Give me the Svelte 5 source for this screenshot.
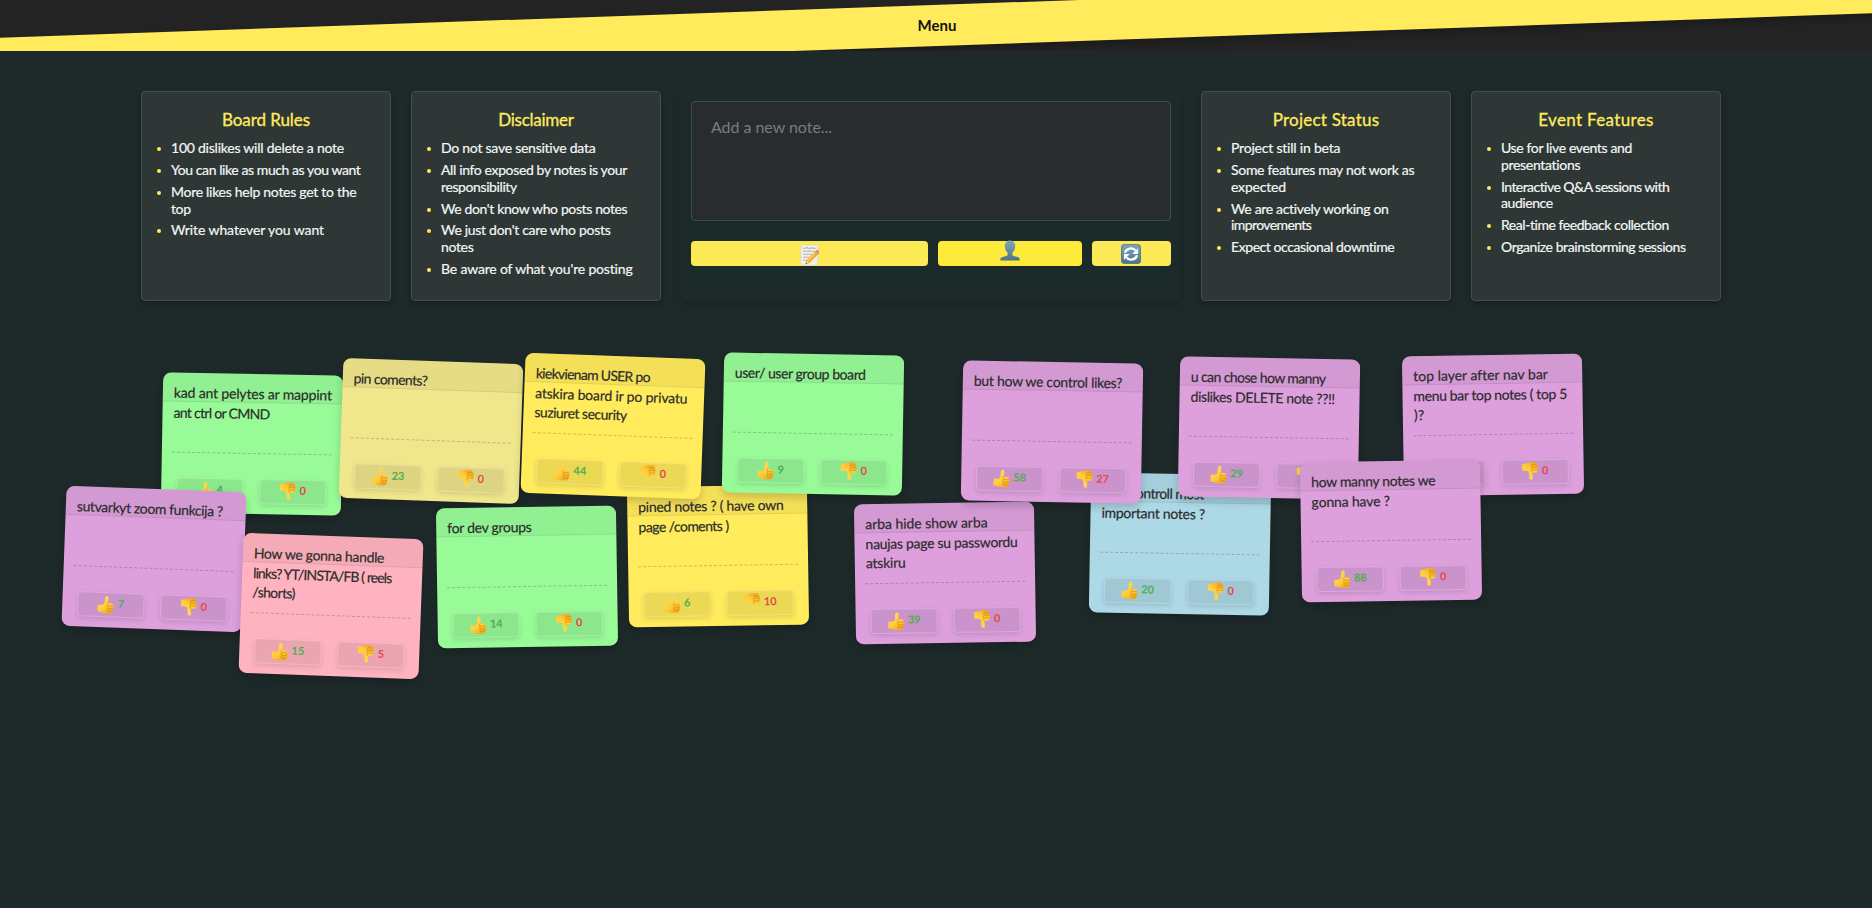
<script>
  const panelsLeft = [
    { title: 'Board Rules', w: 88, items: [
      [['100 dislikes will delete a note', 173]],
      [['You can like as much as you want', 189.4]],
      [['More likes help notes get to the', 185.3], ['top', 19.6]],
      [['Write whatever you want', 153]]
    ] },
    { title: 'Disclaimer', w: 75.4, items: [
      [['Do not save sensitive data', 154.6]],
      [['All info exposed by notes is your', 186], ['responsibility', 75.8]],
      [["We don't know who posts notes", 186.3]],
      [["We just don't care who posts", 169.4], ['notes', 32.4]],
      [["Be aware of what you're posting", 191.8]]
    ] }
  ];
  const panelsRight = [
    { title: 'Project Status', w: 106.7, items: [
      [['Project still in beta', 109.5]],
      [['Some features may not work as', 183.2], ['expected', 55]],
      [['We are actively working on', 157.7], ['improvements', 80.2]],
      [['Expect occasional downtime', 163.6]]
    ] },
    { title: 'Event Features', w: 115.4, items: [
      [['Use for live events and', 130.9], ['presentations', 79.5]],
      [['Interactive Q&A sessions with', 168.4], ['audience', 51.7]],
      [['Real-time feedback collection', 168.4]],
      [['Organize brainstorming sessions', 184.6]]
    ] }
  ];

  // cx / cy is the centre of a note on the board, r its tilt in degrees
  const notes = [
    { cx: 252, cy: 444.3, r: 1, c: 'green', up: 4, down: 0, t: [['kad ant pelytes ar mappint', 158], ['ant ctrl or CMND', 96]] },
    { cx: 431.3, cy: 430.5, r: 2, c: 'khaki', up: 23, down: 0, t: [['pin coments?', 73.7]] },
    { cx: 718, cy: 555.5, r: -0.9, c: 'yellow', up: 6, down: 10, t: [['pined notes ? ( have own', 145.3], ['page /coments )', 90]] },
    { cx: 613, cy: 426, r: 2.1, c: 'yellow', up: 44, down: 0, t: [['kiekvienam USER po', 114], ['atskira board ir po privatu', 152.3], ['suziuret security', 92.3]] },
    { cx: 813.2, cy: 423.7, r: 1, c: 'green', up: 9, down: 0, t: [['user/ user group board', 130.7]] },
    { cx: 1180, cy: 543.8, r: 1, c: 'blue', up: 20, down: 0, t: [['how controll most', 102], ['important notes ?', 103.3]] },
    { cx: 1269.2, cy: 428.2, r: 1, c: 'plum', up: 29, down: 0, t: [['u can chose how manny', 134.7], ['dislikes DELETE note ??!!', 144.3]] },
    { cx: 945.2, cy: 572.5, r: -0.9, c: 'plum', up: 39, down: 0, t: [['arba hide show arba', 122.3], ['naujas page su passwordu', 152], ['atskiru', 39.7]] },
    { cx: 1052.2, cy: 432.2, r: 1, c: 'plum', up: 58, down: 27, t: [['but how we control likes?', 148.3]] },
    { cx: 1493, cy: 425.3, r: -0.9, c: 'plum', up: 70, down: 0, t: [['top layer after nav bar', 134.3], ['menu bar top notes ( top 5', 153.3], [')?', 10.7]] },
    { cx: 154, cy: 559.3, r: 2.1, c: 'plum', up: 7, down: 0, t: [['sutvarkyt zoom funkcija ?', 146]] },
    { cx: 330.8, cy: 605.7, r: 2.1, c: 'pink', up: 15, down: 5, t: [['How we gonna handle', 130.3], ['links? YT/INSTA/FB ( reels', 138.3], ['/shorts)', 42.3]] },
    { cx: 527, cy: 577.3, r: -0.9, c: 'green', up: 14, down: 0, t: [['for dev groups', 84.3]] },
    { cx: 1391.2, cy: 530.5, r: -0.9, c: 'plum', up: 88, down: 0, t: [['how manny notes we', 124], ['gonna have ?', 78.3]] }
  ];

  // Spreads the letters of a line so that it fills the given width
  function fit(node, width) {
    const natural = node.offsetWidth ? parseFloat(getComputedStyle(node).width) : 0;
    const n = node.textContent.length;
    if (natural && n > 1) node.style.letterSpacing = ((width - natural) / n).toFixed(3) + 'px';
  }
</script>

{#snippet panel(p)}
  <section class="panel">
    <h3><span class="line" use:fit={p.w}>{p.title}</span></h3>
    <ul>
      {#each p.items as lines}
        <li>
          {#each lines as l}<div><span class="line" use:fit={l[1]}>{l[0]}</span></div>{/each}
        </li>
      {/each}
    </ul>
  </section>
{/snippet}

{#snippet thumb()}
  <svg viewBox="0 0 16 18" width="17" height="19">
    <path d="M6.4 8.2 C7.2 6 6.7 3.6 7.3 1.7 C7.9 .1 10.2 .5 10.4 2.1 C10.6 4 9.9 6 10.1 7.2 L13.7 7.4 C15.3 7.6 15.5 9.3 14.7 9.8 C16 10.5 15.8 12 14.9 12.4 C15.8 13.3 15.2 14.5 14.3 14.8 C14.8 15.9 14.1 17.1 12.8 17.2 L7.8 17.2 C5.6 17.2 4.2 16.2 2.9 15.8 L.5 15.6 C.2 13 .3 10.9 .8 9.1 C3 9.4 5 9.5 6.4 8.2Z" fill="url(#skin)" />
    <path d="M10 9.9h4.4M10 12.4h4.6M10 14.8h4.1M9.9 7.5C8.7 8.1 8.9 9.2 9.9 9.9C8.9 10.9 9 11.7 10 12.4C9.2 13.2 9.3 14.1 10 14.8" fill="none" stroke="#d58a14" stroke-width=".6" stroke-linecap="round" />
  </svg>
{/snippet}

<svg class="defs" width="0" height="0">
  <defs>
    <linearGradient id="skin" x1="0" y1="0" x2="0.6" y2="1">
      <stop offset="0" stop-color="#ffe05c" />
      <stop offset="0.7" stop-color="#fecb38" />
      <stop offset="1" stop-color="#f0a922" />
    </linearGradient>
    <linearGradient id="slate" x1="0" y1="0" x2="0" y2="1">
      <stop offset="0" stop-color="#81a5bd" />
      <stop offset="1" stop-color="#4d748c" />
    </linearGradient>
  </defs>
</svg>

<div class="page">
  <header>
    <div class="band"></div>
    <span class="menu"><span class="line" use:fit={39}>Menu</span></span>
  </header>

  <main class="top">
    {#each panelsLeft as p}{@render panel(p)}{/each}
    <section class="composer">
      <div class="field"><span class="line" use:fit={121}>Add a new note...</span></div>
      <div class="actions">
        <button class="add" aria-label="Add">
          <svg width="20" height="22" viewBox="0 0 20 22">
            <path d="M1 1h16.5v20H1z" fill="#f1f0ea" />
            <path d="M1 1h16.5v20H1z" fill="none" stroke="#d6d4cc" stroke-width=".6" />
            <path d="M3 4.3h3l1-.8 1 .8h3l1-.6 1 .6h3M3 7.3h5l1-.7 1 .7h5M3 10.3h9M3 13.3h6M3 16.3h4" stroke="#b2b1af" stroke-width="1.1" fill="none" />
            <path d="M15.8 6.9 L19 9.3 L9.4 19 L5.6 20 L6.6 16.2Z" fill="#f7a823" />
            <path d="M16.6 7.4 L7.3 16.5 L8 17.4 L17.5 8.3Z" fill="#ffd15a" />
            <path d="M15.4 7.2 L16.6 6.1 Q18.9 6 19.3 8.5 L18.2 9.7Z" fill="#e77c85" />
            <path d="M14.5 8 L15.4 7.2 L18.2 9.7 L17.3 10.6Z" fill="#a9adb0" />
            <path d="M6.6 16.2 L9.4 19 L5.6 20Z" fill="#ecc796" />
            <path d="M6 18.6 L7 19.6 L5.6 20Z" fill="#363636" />
          </svg>
        </button>
        <button class="user" aria-label="User">
          <svg width="20" height="21" viewBox="0 0 20 21">
            <path d="M10 .4C6.9.4 4.8 2.7 4.8 6.2C4.8 8.9 6 11.2 7.6 12.6V15C7.2 16.4 1 16.6.4 18.6V20.5H19.6V18.6C19 16.6 12.8 16.4 12.4 15V12.6C14 11.2 15.2 8.9 15.2 6.2C15.2 2.7 13.1.4 10 .4Z" fill="url(#slate)" />
          </svg>
        </button>
        <button class="refresh" aria-label="Refresh">
          <svg width="20" height="20" viewBox="0 0 20 20">
            <rect x=".4" y=".4" width="19.2" height="19.2" rx="3.2" fill="url(#slate)" stroke="#466b82" stroke-width=".8" />
            <path d="M4 8.8C5 4.2 11.8 2.8 14.6 6.7M16 11.2C15 15.8 8.2 17.2 5.4 13.3" fill="none" stroke="#fff" stroke-width="2.3" />
            <path d="M17 4.2V10H11.2ZM3 15.8V10H8.8Z" fill="#fff" />
          </svg>
        </button>
      </div>
    </section>
    {#each panelsRight as p}{@render panel(p)}{/each}
  </main>

  {#each notes as n}
    <article class="note {n.c}" style="left:{n.cx - 90}px;top:{n.cy - 70}px;transform:rotate({n.r}deg)">
      <div class="text">
        {#each n.t as l}<div><span class="line" use:fit={l[1]}>{l[0]}</span></div>{/each}
      </div>
      <div class="votes">
        <div class="vote up">{@render thumb()}<b>{n.up}</b></div>
        <div class="vote down">{@render thumb()}<b>{n.down}</b></div>
      </div>
    </article>
  {/each}
</div>

<style>
  :global(body) {
    margin: 0;
    background: #1e2929;
    overflow: hidden;
  }
  .defs { position: absolute; }
  .page {
    position: relative;
    height: 908px;
    overflow: hidden;
    box-sizing: border-box;
    font-family: Lato, "Open Sans", sans-serif;
    background: #1e2929;
  }
  .line { display: inline-block; white-space: pre; }
  header {
    position: relative;
    height: 51px;
    overflow: hidden;
    background: #242424;
    display: flex;
    justify-content: center;
    align-items: center;
  }
  .band {
    position: absolute;
    left: -40px;
    right: -40px;
    top: 4.8px;
    height: 41.3px;
    background: #ffeb5c;
    transform: rotate(-2deg);
    box-shadow: 0 4px 10px rgba(0, 0, 0, 0.3);
  }
  .menu {
    position: relative;
    left: 1px;
    font-size: 15px;
    font-weight: 700;
    line-height: 48px;
    margin-bottom: 2px;
    color: #111;
  }
  .top {
    display: flex;
    gap: 20px;
    padding: 40px 0 0 141px;
  }
  .panel {
    box-sizing: border-box;
    width: 250px;
    height: 210px;
    padding: 15px;
    border: 1px solid #434d4c;
    border-radius: 4px;
    background: #2e3736;
    box-shadow: 0 4px 8px rgba(0, 0, 0, 0.2);
  }
  h3 {
    margin: 2px 0 9px;
    font-size: 17px;
    line-height: 22px;
    font-weight: 400;
    text-align: center;
    color: #ffeb5b;
    -webkit-text-stroke: 0.3px #ffeb5b;
  }
  ul { list-style: none; margin: 0; padding: 0; }
  li {
    position: relative;
    margin-bottom: 5.1px;
    padding-left: 14px;
    font-size: 14px;
    line-height: 16.8px;
    color: #f4f6f5;
    -webkit-text-stroke: 0.2px #f4f6f5;
  }
  li::before {
    content: "";
    position: absolute;
    left: 0;
    top: 7px;
    width: 4px;
    height: 4px;
    border-radius: 50%;
    background: #ffeb5b;
  }
  .composer {
    box-sizing: border-box;
    width: 500px;
    height: 210px;
    padding: 10px;
    border-radius: 8px;
    background: #1c2b2a;
    box-shadow: 0 4px 10px rgba(0, 0, 0, 0.14);
  }
  .field {
    box-sizing: border-box;
    height: 120px;
    padding: 14px 19px;
    border: 1px solid #424849;
    border-radius: 4px;
    background: #292c2e;
    color: #7a7d7d;
    font-size: 16px;
    line-height: 22px;
  }
  .actions { display: flex; gap: 10px; margin-top: 20px; }
  button {
    display: flex;
    align-items: center;
    justify-content: center;
    height: 25px;
    padding: 0;
    border: 0;
    border-radius: 4px;
    background: #fce956;
  }
  .add { width: 237px; }
  .add svg { margin-top: 2px; }
  .user { width: 144px; background: #fdea3a; }
  .user svg { margin-bottom: 7px; }
  .refresh { width: 79px; }
  .refresh svg { margin: 1px 1px 0 0; }
  .note {
    position: absolute;
    box-sizing: border-box;
    width: 180px;
    height: 140px;
    padding: 10px;
    border-radius: 8px;
    overflow: hidden;
    box-shadow: 0 4px 8px rgba(0, 0, 0, 0.18);
  }
  .note::before {
    content: "";
    position: absolute;
    inset: 0 0 auto;
    height: 28px;
    background: rgba(0, 0, 0, 0.045);
    border-bottom: 1px solid rgba(0, 0, 0, 0.07);
  }
  .green { background: #98fb98; }
  .khaki { background: #f0e68c; }
  .yellow { background: #ffeb5c; }
  .plum { background: #dda0dd; }
  .pink { background: #ffb3c0; }
  .blue { background: #add8e6; }
  .text {
    position: relative;
    height: 69px;
    padding-left: 1px;
    border-bottom: 1px dashed rgba(0, 0, 0, 0.2);
    font-size: 14px;
    line-height: 19.7px;
    color: #2b2b2b;
    -webkit-text-stroke: 0.2px #2b2b2b;
  }
  .votes { display: flex; justify-content: center; gap: 16px; margin-top: 24.5px; }
  .vote {
    box-sizing: border-box;
    display: flex;
    align-items: center;
    justify-content: center;
    gap: 3px;
    width: 67px;
    height: 25px;
    border: 1px solid rgba(255, 255, 255, 0.2);
    border-radius: 4px;
    background: rgba(0, 0, 0, 0.08);
    box-shadow: 0 2px 5px rgba(0, 0, 0, 0.12);
  }
  .vote b { font-size: 11px; line-height: 12px; margin-bottom: 3px; }
  .up b { color: #4caf50; }
  .down b { color: #e5484a; }
  .up svg { margin-top: 1px; }
  .down svg { transform: scaleY(-1); margin-bottom: 1px; }
</style>
